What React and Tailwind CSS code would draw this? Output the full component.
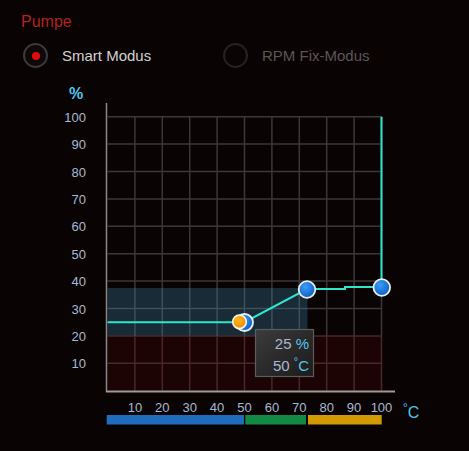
import React from 'react';

const X = (t) => 107.5 + t * 2.74;
const Y = (p) => 390.7 - p * 2.74;
const ticks = [10, 20, 30, 40, 50, 60, 70, 80, 90, 100];
const font = '"Liberation Sans", Arial, sans-serif';

function Radio({ active, label }) {
    return (
        <div className="flex items-center gap-[14px]">
            <div
                className={`w-[25px] h-[25px] rounded-full border-2 flex items-center justify-center ${active ? 'border-[#3a3a3a] bg-[#0e0808]' : 'border-[#262222] bg-[#0a0405]'}`}
            >
                {active && <div className="w-[8px] h-[8px] rounded-full bg-[#e00a0a]"></div>}
            </div>
            <span className={`text-[15px] leading-[18px] ${active ? 'text-[#d2d2d2]' : 'text-[#5a5656]'}`}>{label}</span>
        </div>
    );
}

function Chart() {
    return (
        <svg width="469" height="371" viewBox="0 80 469 371" className="block" style={{ fontFamily: font }}>
            <defs>
                <radialGradient id="blueDot" cx="0.4" cy="0.35" r="0.7">
                    <stop offset="0" stopColor="#3a9cf5" />
                    <stop offset="1" stopColor="#0a5cc0" />
                </radialGradient>
                <radialGradient id="orangeDot" cx="0.4" cy="0.35" r="0.7">
                    <stop offset="0" stopColor="#ffb820" />
                    <stop offset="1" stopColor="#e88a00" />
                </radialGradient>
                <linearGradient id="tip" x1="0" y1="0" x2="1" y2="1">
                    <stop offset="0" stopColor="#3c3c3c" />
                    <stop offset="0.5" stopColor="#2a2a2a" />
                    <stop offset="1" stopColor="#1c1c1c" />
                </linearGradient>
            </defs>

            <text x="69" y="99" fill="#55c5ef" fontSize="16" fontWeight="bold">%</text>

            {/* zones */}
            <rect x={X(0)} y={Y(20)} width={X(100) - X(0)} height={Y(0) - Y(20)} fill="#1c0304" />
            <rect x={X(0)} y={Y(37.5)} width={307.5 - X(0)} height={Y(20) - Y(37.5)} fill="#182b36" />

            {/* grid */}
            {ticks.map((p) =>
                p === 30 ? (
                    <g key={`h${p}`}>
                        <line x1={X(0)} x2="307.5" y1={Y(p)} y2={Y(p)} stroke="#3d4f5a" strokeWidth="1.5" />
                        <line x1="307.5" x2={X(100)} y1={Y(p)} y2={Y(p)} stroke="#3a3838" strokeWidth="1.5" />
                    </g>
                ) : (
                    <line key={`h${p}`} x1={X(0)} x2={X(100)} y1={Y(p)} y2={Y(p)}
                        stroke={p <= 20 ? '#4a2828' : '#3a3838'} strokeWidth="1.5" />
                )
            )}
            {ticks.map((t) => (
                <g key={`v${t}`}>
                    <line x1={X(t)} x2={X(t)} y1={Y(100)} y2={Y(37.5)} stroke="#3a3838" strokeWidth="1.5" />
                    <line x1={X(t)} x2={X(t)} y1={Y(37.5)} y2={Y(20)} stroke={X(t) < 308 ? '#3d4f5a' : '#3a3838'} strokeWidth="1.5" />
                    <line x1={X(t)} x2={X(t)} y1={Y(20)} y2={Y(0)} stroke="#4a2828" strokeWidth="1.5" />
                </g>
            ))}

            {/* axes */}
            <line x1="106.5" x2="106.5" y1="103" y2="392" stroke="#8c8888" strokeWidth="1.5" />
            <line x1="106" x2="395" y1="391.5" y2="391.5" stroke="#a09a98" strokeWidth="2" />

            {/* y labels */}
            {ticks.map((p) => (
                <text key={`yl${p}`} x="86" y={Y(p) + 5} textAnchor="end" fill="#a9b9d2" fontSize="13">{p}</text>
            ))}

            {/* curve */}
            <polyline
                points={`${X(0)},322.2 244.5,322.2 307,289 345,289 345,287 381.5,287 381.5,${Y(100)}`}
                fill="none" stroke="#2ee6cc" strokeWidth="2"
            />

            {/* points */}
            <circle cx="244.5" cy="322.5" r="8.5" fill="url(#blueDot)" stroke="#e8eef5" strokeWidth="1.8" />
            <circle cx="239.5" cy="321.8" r="6.8" fill="url(#orangeDot)" stroke="#f4f4f4" strokeWidth="1.6" />
            <circle cx="307" cy="289.5" r="8.3" fill="url(#blueDot)" stroke="#e8eef5" strokeWidth="1.8" />
            <circle cx="381.8" cy="287.5" r="8.3" fill="url(#blueDot)" stroke="#e8eef5" strokeWidth="1.8" />

            {/* tooltip */}
            <rect x="255.5" y="329.5" width="58" height="47" fill="url(#tip)" stroke="#5c5c5c" strokeWidth="1.2" />
            <text x="309" y="348.5" textAnchor="end" fontSize="15">
                <tspan fill="#a9b9d2">25 </tspan><tspan fill="#55c5ef">%</tspan>
            </text>
            <text x="309" y="370.5" textAnchor="end" fontSize="15">
                <tspan fill="#a9b9d2">50 </tspan><tspan fill="#55c5ef" fontSize="11" dy="-6">°</tspan><tspan fill="#55c5ef" dy="6">C</tspan>
            </text>

            {/* x labels */}
            {ticks.map((t) => (
                <text key={`xl${t}`} x={X(t)} y="411.5" textAnchor="middle" fill="#a9b9d2" fontSize="13">{t}</text>
            ))}
            <text x="403" y="417.5" fill="#4cc8ea" fontSize="16">
                <tspan fontSize="12" dy="-6">°</tspan><tspan dy="6">C</tspan>
            </text>

            {/* temperature bar */}
            <rect x="106.7" y="415" width="137.3" height="9.5" fill="#1f6cbd" />
            <rect x="245.3" y="415" width="60.7" height="9.5" fill="#128a46" />
            <rect x="308" y="415" width="73.7" height="9.5" fill="#d39a00" />
        </svg>
    );
}

export default function App() {
    return (
        <div className="w-[469px] h-[451px] bg-[#0a0304] overflow-hidden" style={{ fontFamily: font }}>
            <div className="pt-[13px] pl-[21px]">
                <h1 className="text-[16px] leading-[18px] text-[#b42420]">Pumpe</h1>
            </div>
            <div className="mt-[12px] pl-[23px] flex items-center h-[25px]">
                <div className="w-[200px]">
                    <Radio active label="Smart Modus" />
                </div>
                <Radio label="RPM Fix-Modus" />
            </div>
            <div className="mt-[12px]">
                <Chart />
            </div>
        </div>
    );
}
